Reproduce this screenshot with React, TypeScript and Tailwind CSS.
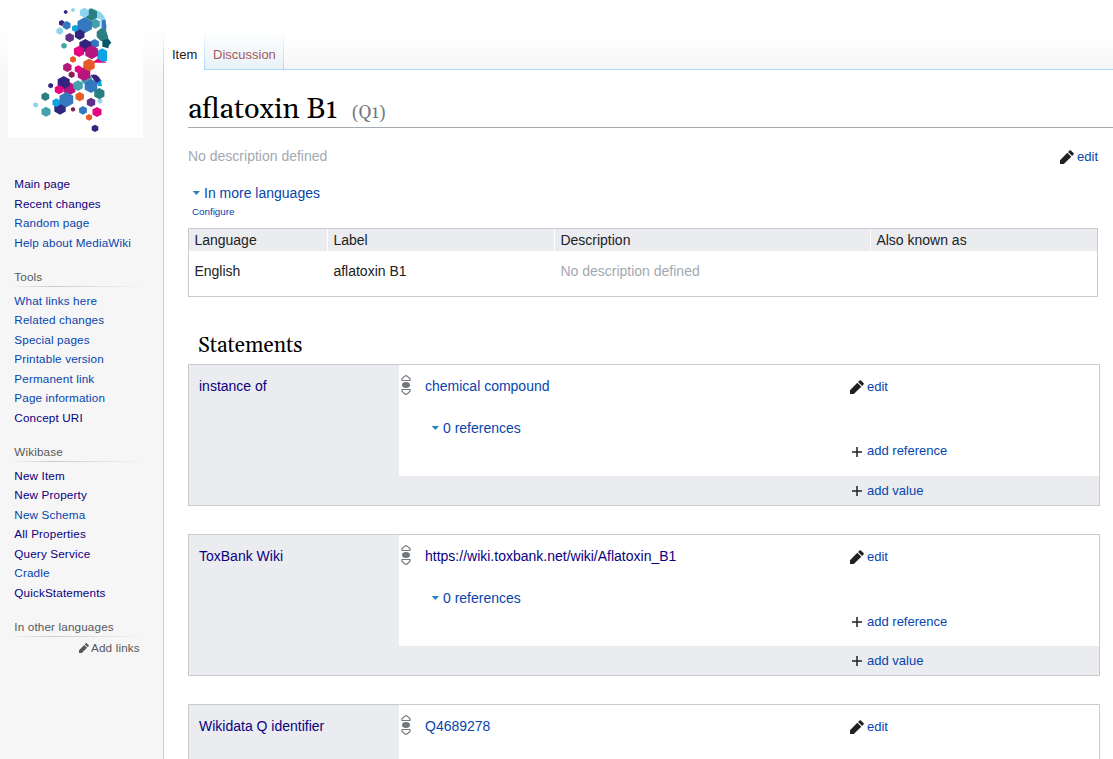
import React from "react";

type Hex = [number, number, number, string];

const hexes: Hex[] = [
  [197, 36, 6, "#36247f"], [219, 30, 6, "#8fd3ee"], [274, 44, 19, "#2a7f80"], [253, 38, 15, "#8fd3f2"],
  [185, 69, 9, "#36247f"], [226, 85, 11, "#0da4e4"], [200, 76, 13, "#3178bf"], [179, 93, 11, "#8fd3ee"],
  [286, 71, 15, "#44a2ad"], [254, 76, 24, "#3478bf"], [209, 113, 14, "#5f318a"], [239, 104, 16, "#30267f"],
  [192, 137, 9, "#44a2a5"], [284, 131, 14, "#3178bf"], [256, 137, 20, "#35247f"], [275, 157, 21, "#b5157d"],
  [237, 154, 17, "#e5057f"], [219, 178, 10, "#e75b26"], [202, 202, 14, "#b01a78"],
  [260, 238, 17, "#44a2ad"], [252, 222, 21, "#b5157d"], [235, 208, 12, "#e5057f"], [267, 195, 19, "#e75b26"], [215, 224, 10, "#8c1d59"],
  [208, 266, 20, "#b5157d"], [191, 248, 20, "#35247f"], [152, 257, 8, "#35247f"], [177, 269, 14, "#e5057f"],
  [234, 257, 16, "#44a2ad"], [273, 258, 21, "#3478bf"], [136, 290, 13, "#2a7f80"],
  [107, 315, 8, "#8fd3ee"], [138, 335, 15, "#44a2ad"], [180, 325, 19, "#30267f"], [169, 308, 13, "#0da4e4"],
  [199, 299, 23, "#3478bf"], [239, 290, 14, "#e75b26"], [300, 303, 8, "#8fd3ee"], [298, 281, 17, "#2a7f80"],
  [273, 307, 14, "#5f318a"], [219, 328, 7, "#8c1d59"], [249, 331, 13, "#3178bf"], [291, 336, 15, "#e5057f"],
  [267, 352, 10, "#e75b26"], [285, 385, 11, "#30267f"],
];

const hexPoints = ([x, y, r]: Hex) =>
  [[0, -1], [0.9, -0.5], [0.9, 0.5], [0, 1], [-0.9, 0.5], [-0.9, -0.5]]
    .map(([a, b]) => `${x + a * r},${y + b * r}`)
    .join(" ");

function Logo() {
  return (
    <svg viewBox="24 9 405 405" className="block h-[135px] w-[135px] bg-white">
      <path d="M266 25Q306 28 317 59L319 90L302 88L301 58L287 54Z" fill="#8fd3f2" />
      <path d="M306 60L316 59Q321 77 318 92L306 85Z" fill="#3478bf" />
      <path d="M304 84L318 91L325 113L323 119L303 124L290 110V95Z" fill="#2a7f80" />
      <path d="M307 121L325 116L334 128L327 136L325 145L307 140Z" fill="#075767" />
      <path d="M277 188L292 176L307 179L320 188Z" fill="#e5057f" />
      <path d="M292 153L307 145L321 153V183L308 185L292 176Z" fill="#0da4e4" />
      <path d="M272 226Q285 219 296 230L305 244L289 251Z" fill="#35247f" />
      <path d="M291 250L303 239L306 259L294 258Z" fill="#0da4e4" />
      {hexes.map((h, i) => (
        <polygon key={i} points={hexPoints(h)} fill={h[3]} />
      ))}
    </svg>
  );
}

function Pencil({ className }: { className: string }) {
  return (
    <svg viewBox="0 0 14 14" className={className} fill="currentColor">
      <path d="M0 10.2V13.5Q0 14 .5 14H3.8L11.3 6.7L7.3 2.7ZM8.1 1.9L12.1 5.9L13.5 4.5Q14.2 3.8 13.5 3.1L10.9 .5Q10.2 -.2 9.5 .5Z" />
    </svg>
  );
}

function Plus() {
  return (
    <svg viewBox="0 0 10 10" className="mt-px mr-[5px] h-[10px] w-[10px]" stroke="#202122" strokeWidth="1.5">
      <path d="M5 0V10M0 5H10" />
    </svg>
  );
}

function Caret() {
  return (
    <svg viewBox="0 0 8 4" className="mr-[4px] h-1 w-2" fill="#2f80b5">
      <path d="M.7 0H8L4.4 4Z" />
    </svg>
  );
}

function Rank() {
  return (
    <svg viewBox="0 0 10 20" className="h-5 w-[10px] shrink-0" fill="none" stroke="#72777d" strokeWidth="1.1">
      <path d="M1 5.5L.8 4Q4 .6 5 .6Q6 .6 9.2 4L9 5.5Z" />
      <ellipse cx="5" cy="10" rx="4" ry="3" fill="#72777d" stroke="none" />
      <path d="M1 14.5L.8 16Q4 19.4 5 19.4Q6 19.4 9.2 16L9 14.5Z" />
    </svg>
  );
}

function EditLink() {
  return (
    <span className="flex items-center text-[13px] leading-5 text-[#0645ad]">
      <Pencil className="mr-[3px] h-[14px] w-[14px] text-[#202122]" />edit
    </span>
  );
}

type NavItem = [string, boolean];

function Nav({ title, items }: { title?: string; items: NavItem[] }) {
  return (
    <nav className="mb-[14.7px]">
      {title && <NavTitle>{title}</NavTitle>}
      <ul className={title ? "pt-1" : ""}>
        {items.map(([label, visited]) => (
          <li key={label} className={`h-[19.5px] pl-[6.3px] leading-[19px] ${visited ? "text-[#0b0080]" : "text-[#0645ad]"}`}>
            {label}
          </li>
        ))}
      </ul>
    </nav>
  );
}

function NavTitle({ children }: { children: React.ReactNode }) {
  return (
    <div>
      <h3 className="h-[19px] pl-[6.3px] leading-[19px] text-[#54595d]">{children}</h3>
      <div className="h-px bg-linear-to-r from-transparent via-[#c8ccd1] via-33% to-transparent" />
    </div>
  );
}

type StatementProps = { property: string; value: string; visited?: boolean; collapsed?: boolean };

function Statement({ property, value, visited, collapsed }: StatementProps) {
  return (
    <section className="mb-[28.2px] flex h-[142px] w-[912px] shrink-0 border border-[#c8ccd1] bg-[#eaecf0]">
      <div className="w-[210px] pt-[11px] pl-[10px] text-[14px] leading-5 text-[#0b0080]">{property}</div>
      <div className="flex-1">
        <div className="flex h-[111px] bg-white">
          <div className="w-[451px] pt-[10px] pl-[2px]">
            <div className="flex">
              <Rank />
              <span className={`mt-px ml-[14px] text-[14px] leading-5 ${visited ? "text-[#0b0080]" : "text-[#0645ad]"}`}>{value}</span>
            </div>
            {!collapsed && (
              <div className="mt-[21px] flex items-center pl-[30px] text-[14px] leading-[22px] text-[#0645ad]">
                <Caret />0 references
              </div>
            )}
          </div>
          <div className="pt-3 text-[13px] leading-5 text-[#0645ad]">
            <EditLink />
            {!collapsed && <div className="mt-[44.4px] flex items-center pl-[2px]"><Plus />add reference</div>}
          </div>
        </div>
        {!collapsed && (
          <div className="flex h-[29px] items-center pl-[453px] text-[13px] text-[#0645ad]"><Plus />add value</div>
        )}
      </div>
    </section>
  );
}

export default function App() {
  return (
    <div className="flex h-[759px] w-[1113px] overflow-hidden bg-[#f6f6f6] font-['Liberation_Sans',Arial,sans-serif] text-[#202122]">
      <aside className="flex w-[163px] shrink-0 flex-col bg-linear-to-b from-white from-[30px] to-[#f6f6f6] to-[80px] text-[11.7px] tracking-[0.15px]">
        <div className="pt-[3px] pl-2"><Logo /></div>
        <div className="w-[146px] pt-[36px] pl-2">
          <Nav items={[["Main page", true], ["Recent changes", true], ["Random page", false], ["Help about MediaWiki", false]]} />
          <Nav title="Tools" items={[["What links here", false], ["Related changes", false], ["Special pages", false], ["Printable version", false], ["Permanent link", false], ["Page information", false], ["Concept URI", true]]} />
          <Nav title="Wikibase" items={[["New Item", true], ["New Property", true], ["New Schema", false], ["All Properties", true], ["Query Service", true], ["Cradle", false], ["QuickStatements", true]]} />
          <NavTitle>In other languages</NavTitle>
          <div className="flex items-center pt-px pl-[71px] leading-[19px] whitespace-nowrap text-[#54595d]">
            <Pencil className="mr-[2px] h-[10px] w-[10px]" />Add links
          </div>
        </div>
      </aside>
      <div className="w-px shrink-0 bg-linear-to-b from-white from-[30px] to-[#a7d7f9] to-[70px]" />
      <div className="flex min-w-0 flex-1 flex-col">
        <header className="flex h-[70px] shrink-0 items-end bg-linear-to-b from-white from-[35px] to-[#f6f6f6] text-[13px]">
          <div className="h-10 w-10 bg-white pt-[15px] pl-2 leading-[20px]">Item</div>
          <div className="h-10 w-px bg-linear-to-b from-white to-[#a7d7f9]" />
          <div className="h-10 w-[78px] border-b border-[#a7d7f9] bg-linear-to-b from-white to-[#e8f2f8] pt-[15px] pl-2 leading-[20px] text-[#a55858]">Discussion</div>
          <div className="h-10 w-px bg-linear-to-b from-white to-[#a7d7f9]" />
          <div className="h-10 flex-1 border-b border-[#a7d7f9]" />
        </header>
        <main className="flex flex-1 flex-col bg-white pl-6">
          <h1 className="flex h-[58px] shrink-0 items-baseline border-b border-[#a2a9b1] pt-[21px] font-[Georgia,Gelasio,'DejaVu_Serif',serif] text-[28.8px] leading-[37px] text-black">
            aflatoxin B1<span className="ml-[14.5px] text-[17.3px] text-[#72777d]">(Q1)</span>
          </h1>
          <div className="flex w-[910px] shrink-0 justify-between pt-[18px] text-[14px] leading-5 text-[#a2a9b1]">
            No description defined
            <div className="pt-px"><EditLink /></div>
          </div>
          <div className="mt-[15px] flex items-center pl-1 text-[14px] leading-[22px] text-[#0645ad]"><Caret />In more languages</div>
          <div className="h-[24px] pl-1 text-[9.8px] leading-[15px] text-[#0645ad]">Configure</div>
          <div className="h-[69px] w-[910px] shrink-0 border border-[#c8ccd1] text-[14px]">
            <div className="grid h-[22px] grid-cols-[139px_227px_316px_1fr] leading-[22px] [&>*]:bg-[#eaecf0] [&>*]:pl-[5.4px]">
              <div className="border-r border-white">Language</div>
              <div className="border-r border-white">Label</div>
              <div className="border-r border-white">Description</div>
              <div>Also known as</div>
            </div>
            <div className="grid grid-cols-[139px_227px_316px_1fr] pt-[10px] leading-5 [&>*]:pl-[5.4px]">
              <div>English</div>
              <div>aflatoxin B1</div>
              <div className="text-[#a2a9b1]">No description defined</div>
              <div />
            </div>
          </div>
          <h2 className="h-[67px] shrink-0 pt-[35px] pl-[10px] font-[Georgia,Gelasio,'DejaVu_Serif',serif] text-[21px] leading-[28px] text-black">Statements</h2>
          <Statement property="instance of" value="chemical compound" />
          <Statement property="ToxBank Wiki" value="https://wiki.toxbank.net/wiki/Aflatoxin_B1" visited />
          <Statement property="Wikidata Q identifier" value="Q4689278" collapsed />
        </main>
      </div>
    </div>
  );
}
